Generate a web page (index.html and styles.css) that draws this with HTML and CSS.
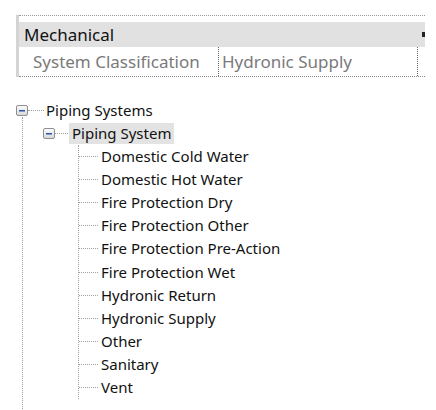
FILE: index.html
```html
<!DOCTYPE html>
<html>
<head>
<meta charset="utf-8">
<link rel="stylesheet" href="styles.css">
</head>
<body>
<div class="props">
  <div class="top-rule"></div>
  <div class="group-row">
    <span class="group-label">Mechanical</span>
    <span class="group-mark"></span>
  </div>
  <div class="prop-row">
    <div class="prop-name">System Classification</div>
    <div class="prop-value">Hydronic Supply</div>
  </div>
</div>

<div class="tree">
  <div class="root-line"></div>
  <div class="node root">
    <span class="toggle"></span>
    <span class="hline h-root"></span>
    <span class="label">Piping Systems</span>
  </div>
  <div class="node level1">
    <span class="toggle"></span>
    <span class="hline h-l1"></span>
    <span class="label selected">Piping System</span>
  </div>
  <ul class="leaves">
    <li><span class="hline"></span><span class="label">Domestic Cold Water</span></li>
    <li><span class="hline"></span><span class="label">Domestic Hot Water</span></li>
    <li><span class="hline"></span><span class="label">Fire Protection Dry</span></li>
    <li><span class="hline"></span><span class="label">Fire Protection Other</span></li>
    <li><span class="hline"></span><span class="label">Fire Protection Pre-Action</span></li>
    <li><span class="hline"></span><span class="label">Fire Protection Wet</span></li>
    <li><span class="hline"></span><span class="label">Hydronic Return</span></li>
    <li><span class="hline"></span><span class="label">Hydronic Supply</span></li>
    <li><span class="hline"></span><span class="label">Other</span></li>
    <li><span class="hline"></span><span class="label">Sanitary</span></li>
    <li class="last"><span class="hline"></span><span class="label">Vent</span></li>
  </ul>
</div>
</body>
</html>
```

FILE: styles.css
```css
html, body {
  margin: 0;
  padding: 0;
  background: #ffffff;
  width: 436px;
  height: 410px;
  overflow: hidden;
  font-family: "Noto Sans", "Open Sans", sans-serif;
}

.props {
  margin: 15px 0 0 16px;
  width: 406px;
  border-left: 3px solid #d4d4d4;
}

.top-rule {
  height: 6px;
  border-top: 1px dotted #9a9a9a;
}

.group-row {
  height: 25px;
  background: #e1e1e1;
  display: flex;
  align-items: center;
  justify-content: space-between;
  padding-left: 5px;
  font-size: 17px;
  color: #111;
}

.group-mark {
  width: 3px;
  height: 5px;
  background: #222;
}

.prop-row {
  display: grid;
  grid-template-columns: 200px 199px;
  height: 29px;
  border-bottom: 1px dotted #8a8a8a;
  font-size: 17px;
  color: #7a7a7a;
}

.prop-name {
  padding-left: 14px;
  display: flex;
  align-items: center;
  border-right: 1px dotted #666;
}

.prop-value {
  padding-left: 3px;
  display: flex;
  align-items: center;
  border-right: 1px dotted #666;
}

.tree {
  position: relative;
  margin-top: 22px;
  font-size: 15px;
  color: #111;
}

.root-line {
  position: absolute;
  left: 22px;
  top: 18px;
  height: 300px;
  border-left: 1px dotted #a0a0a0;
}

.node {
  display: flex;
  align-items: center;
  height: 23px;
}

.root { padding-left: 16px; }
.level1 { padding-left: 43px; }

.toggle {
  position: relative;
  box-sizing: border-box;
  width: 12px;
  height: 11px;
  border: 1px solid #8f8f8f;
  border-radius: 2px;
  background: linear-gradient(#fbfbfb, #d9d9d9);
  flex: none;
}

.toggle::after {
  content: "";
  position: absolute;
  left: 2px;
  right: 2px;
  top: 4px;
  height: 1px;
  background: #2f56a0;
  box-shadow: 0 1px 0 #7f9ccc;
}

.hline {
  display: inline-block;
  border-top: 1px dotted #a0a0a0;
  height: 0;
  flex: none;
}

.h-root { width: 16px; margin-right: 2px; }
.h-l1 { width: 13px; margin-right: 1px; }

.label {
  white-space: nowrap;
  line-height: 21px;
}

.selected {
  background: #e3e3e3;
  padding: 0 3px;
}

.leaves {
  list-style: none;
  margin: 0 0 0 78px;
  padding: 0;
  border-left: 1px dotted #a0a0a0;
}

.leaves li {
  display: flex;
  align-items: center;
  height: 23.1px;
}

.leaves .hline {
  width: 19px;
  margin-right: 3px;
}
```
